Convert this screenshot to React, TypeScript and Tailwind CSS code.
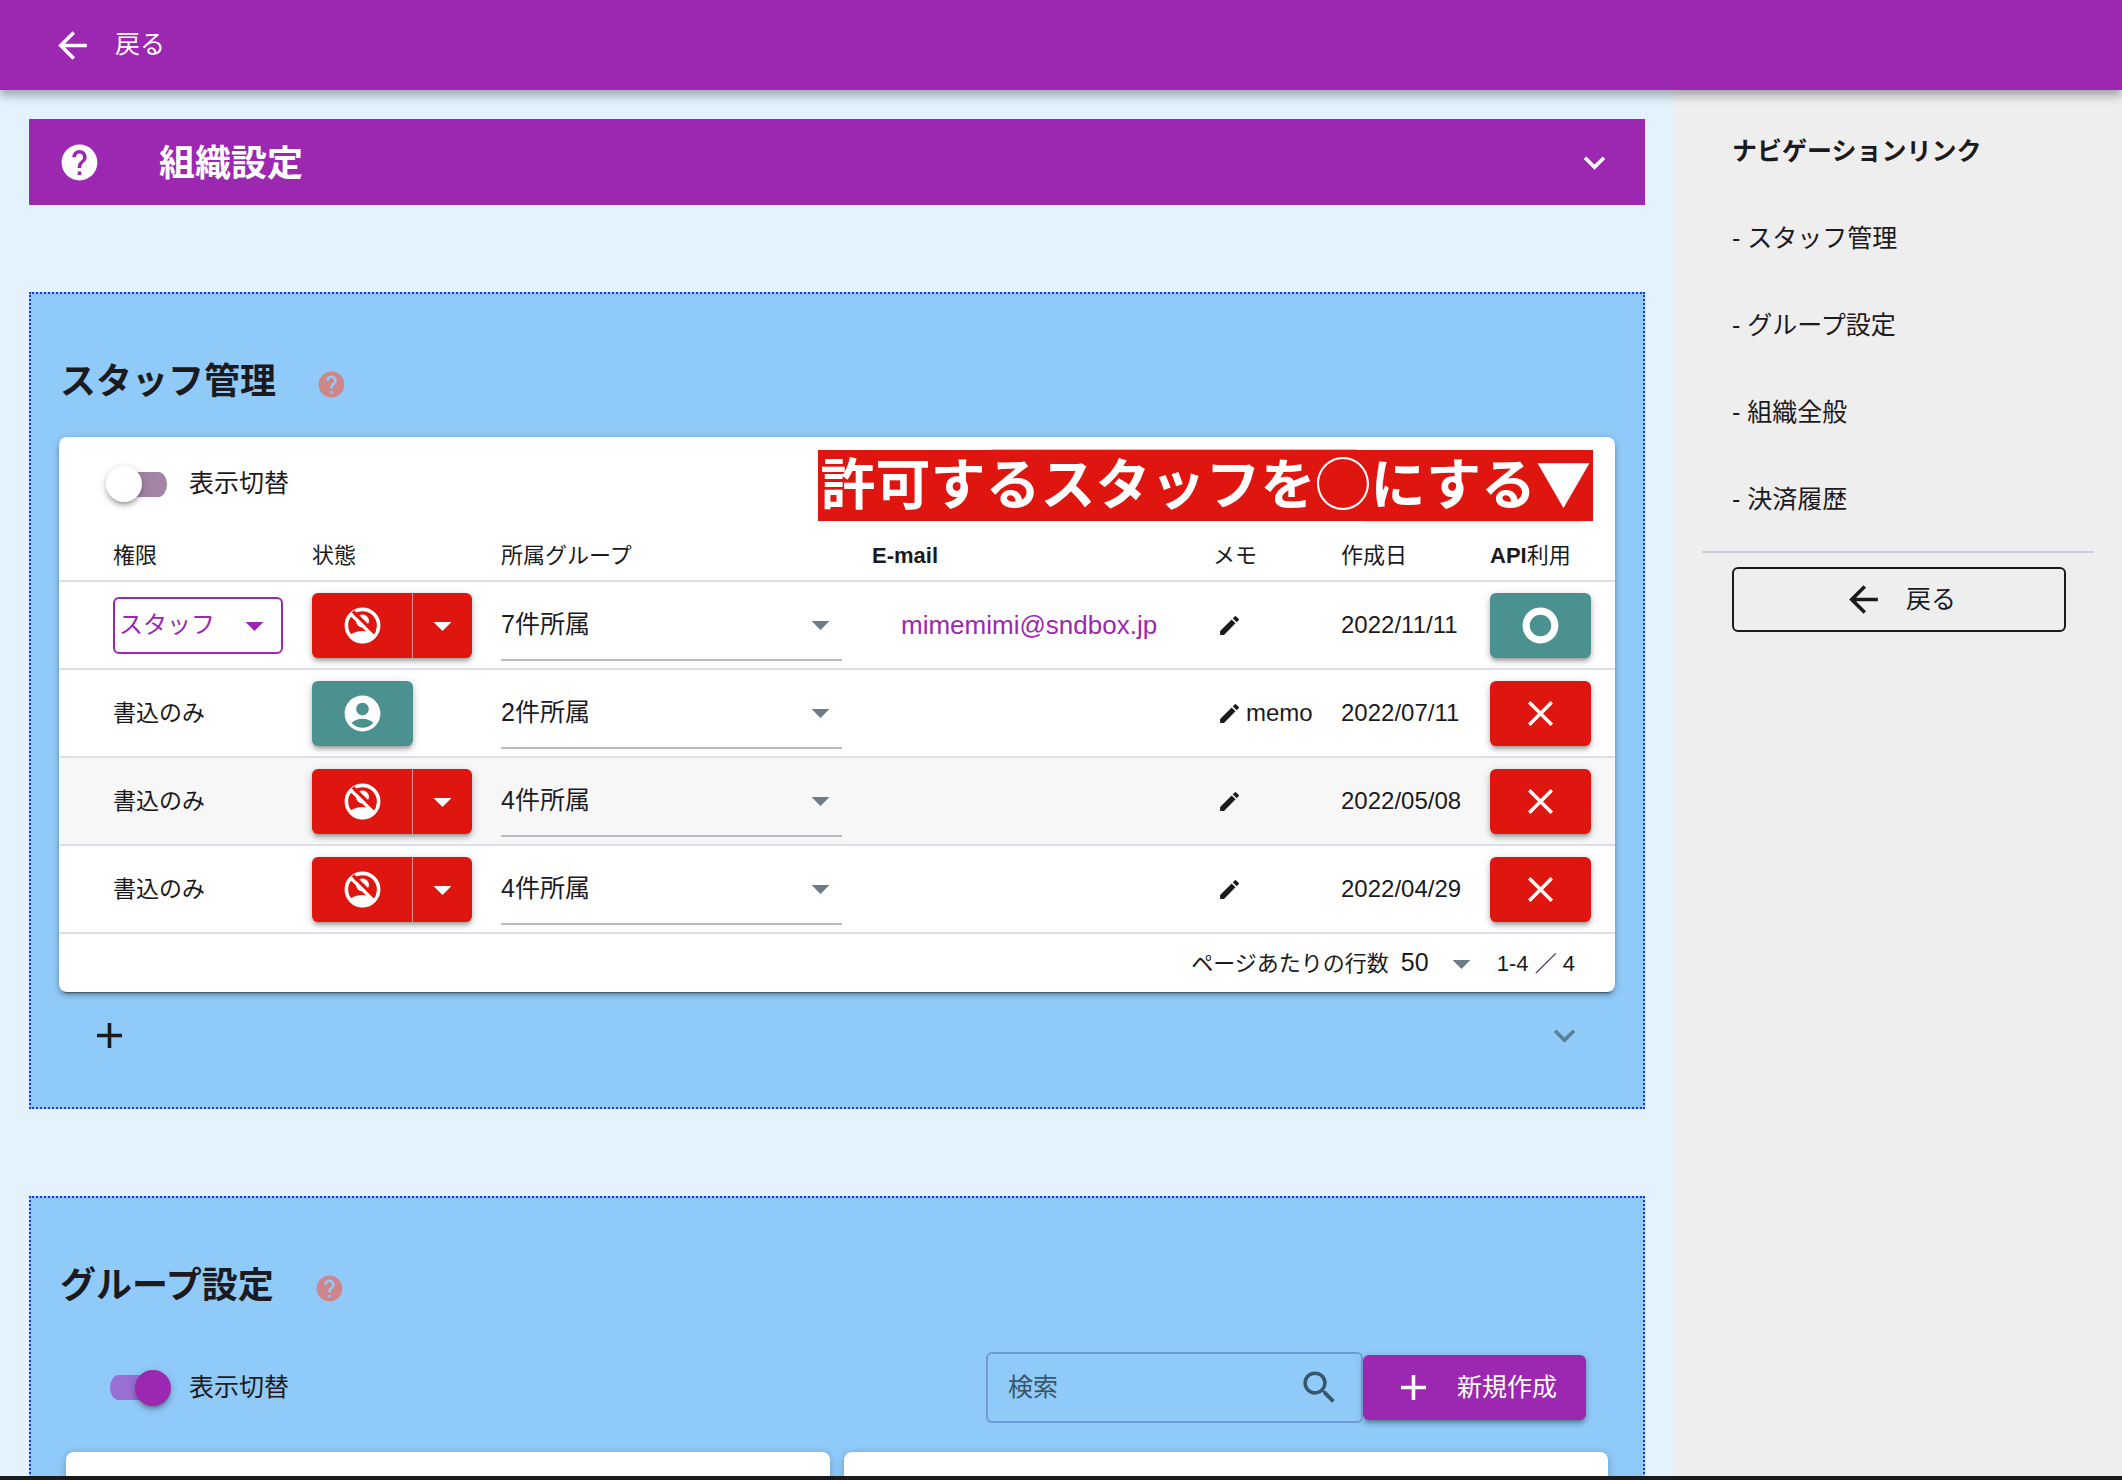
import { useState } from "react";
import type { ReactNode } from "react";
import {
  MdAccountCircle,
  MdAdd,
  MdArrowBack,
  MdArrowDropDown,
  MdClose,
  MdEdit,
  MdHelp,
  MdKeyboardArrowDown,
  MdSearch,
  MdTripOrigin,
} from "react-icons/md";

type Staff = {
  id: number;
  role: string;
  editable?: boolean;
  active: boolean;
  groups: string;
  email?: string;
  memo?: string;
  created: string;
  api: boolean;
};

const STAFF: Staff[] = [
  { id: 1, role: "スタッフ", editable: true, active: false, groups: "7件所属", email: "mimemimi@sndbox.jp", created: "2022/11/11", api: true },
  { id: 2, role: "書込のみ", active: true, groups: "2件所属", memo: "memo", created: "2022/07/11", api: false },
  { id: 3, role: "書込のみ", active: false, groups: "4件所属", created: "2022/05/08", api: false },
  { id: 4, role: "書込のみ", active: false, groups: "4件所属", created: "2022/04/29", api: false },
];

const LINKS = [
  { href: "#staff", label: "スタッフ管理" },
  { href: "#group", label: "グループ設定" },
  { href: "#org", label: "組織全般" },
  { href: "#billing", label: "決済履歴" },
];

const RAISED = "shadow-[0_2px_8px_rgba(0,0,0,0.2),0_4px_4px_rgba(0,0,0,0.14),0_4px_2px_-2px_rgba(0,0,0,0.12)]";

function NoAccountIcon() {
  return (
    <svg viewBox="0 0 24 24" className="size-[43px]" aria-hidden="true">
      <circle cx="12" cy="12" r="9" fill="none" stroke="#fff" strokeWidth="2" />
      <circle cx="12" cy="9.5" r="3.6" fill="#fff" />
      <path d="M5 17.2C7 15.8 9.400 15 12 15s5 .8 7 2.200A8.800 8.800 0 0 1 12 20.800a8.800 8.800 0 0 1-7-3.600z" fill="#fff" />
      <path d="M6.700 4.100 18.800 16.200" stroke="#de160f" strokeWidth="1.900" />
      <path d="M5.300 5.500 18.400 18.300" stroke="#fff" strokeWidth="1.800" />
    </svg>
  );
}

function Toggle({ initial }: { initial: boolean }) {
  const [on, setOn] = useState(initial);
  return (
    <label className="flex cursor-pointer items-center gap-[18px] text-[25px]">
      <input type="checkbox" className="peer sr-only" checked={on} onChange={(e) => setOn(e.target.checked)} />
      <span
        className={`flex h-[25px] w-[65px] items-center rounded-full bg-clip-content px-1 ${
          on ? "justify-end bg-[#9c27b0]/55" : "justify-start bg-[#a285a5]"
        }`}
      >
        <span className={`-mx-1 size-9 shrink-0 rounded-full ${RAISED} ${on ? "bg-[#9c27b0]" : "bg-white"}`} />
      </span>
      表示切替
    </label>
  );
}

function Section({ id, title, children }: { id: string; title: string; children: ReactNode }) {
  return (
    <section id={id} className="border-2 border-dotted border-[#1c2fff] bg-[#90caf9] px-7 pt-[50px]">
      <div className="mb-[21px] flex h-[72px] items-center gap-10 pl-px">
        <h2 className="pt-1 text-[36px] font-bold">{title}</h2>
        <button aria-label={`${title}のヘルプ`} className="pt-2 text-[#cd8689]">
          <MdHelp className="size-[31px]" />
        </button>
      </div>
      {children}
    </section>
  );
}

function StatusButton({ active }: { active: boolean }) {
  if (active) {
    return (
      <button aria-label="有効" className={`flex h-[65px] w-[101px] items-center justify-center rounded-md bg-[#4b9190] text-white ${RAISED}`}>
        <MdAccountCircle className="size-[43px]" />
      </button>
    );
  }
  return (
    <div className={`flex h-[65px] w-[160px] rounded-md bg-[#de160f] text-white ${RAISED}`}>
      <button aria-label="無効" className="flex w-[101px] items-center justify-center border-r border-[#e98f8c]">
        <NoAccountIcon />
      </button>
      <button aria-label="状態を変更" className="flex flex-1 items-center justify-center">
        <MdArrowDropDown className="size-[43px]" />
      </button>
    </div>
  );
}

function StaffRow({ staff }: { staff: Staff }) {
  return (
    <tr className={`h-[88px] border-b-2 border-[#dcdfe7] ${staff.id === 3 ? "bg-[#f7f7f7]" : ""}`}>
      <td className="pl-[54px] text-[23px]">
        {staff.editable ? (
          <div className="relative h-[57px] w-[170px] text-[#9c27b0]">
            <select aria-label="権限" className="h-full w-full appearance-none rounded-md border-2 border-[#9c27b0] pl-1 text-[24px]">
              <option>{staff.role}</option>
            </select>
            <MdArrowDropDown className="pointer-events-none absolute top-[7px] right-[7px] size-[43px]" />
          </div>
        ) : (
          staff.role
        )}
      </td>
      <td className="pl-3.5">
        <StatusButton active={staff.active} />
      </td>
      <td className="pl-3.5">
        <div className="relative w-[341px]">
          <select aria-label="所属グループ" className="h-[72px] w-full appearance-none border-b-2 border-[#b9bbc4] pt-0.5 text-[25px]">
            <option>{staff.groups}</option>
          </select>
          <MdArrowDropDown className="pointer-events-none absolute top-3.5 right-0 size-[43px] text-[#6e7c86]" />
        </div>
      </td>
      <td className="pl-[43px]">
        {staff.email && (
          <a href={`mailto:${staff.email}`} className="text-[26px] text-[#9c27b0]">
            {staff.email}
          </a>
        )}
      </td>
      <td className="pl-4">
        <button aria-label="メモを編集" className="flex items-center gap-1 text-[24px]">
          <MdEdit className="size-[25px]" />
          {staff.memo}
        </button>
      </td>
      <td className="pl-3.5 text-[24px]">{staff.created}</td>
      <td className="pl-3.5">
        <button
          aria-label={staff.api ? "API利用中" : "API利用不可"}
          className={`flex h-[65px] w-[101px] items-center justify-center rounded-md text-white ${RAISED} ${
            staff.api ? "bg-[#4b9190]" : "bg-[#de160f]"
          }`}
        >
          {staff.api ? <MdTripOrigin className="size-[43px]" /> : <MdClose className="size-[43px]" />}
        </button>
      </td>
    </tr>
  );
}

function StaffTable() {
  return (
    <div className="rounded-lg bg-white shadow-[0_2px_9px_rgba(0,0,0,0.2),0_4px_4px_rgba(0,0,0,0.14),0_5px_2px_-4px_rgba(0,0,0,0.5)]">
      <div className="relative flex h-[94px] items-center justify-between pr-[29px] pl-[47px]">
        <Toggle initial={false} />
        <div className="flex items-center">
          <input type="search" aria-label="スタッフ検索" className="h-[71px] w-[373px] rounded-md border-2 border-[#c2c4cc]" />
          <button aria-label="スタッフを追加" className={`h-[65px] w-[225px] rounded-md bg-[#9c27b0] ${RAISED}`} />
        </div>
        <p className="absolute top-[13px] right-[22px] h-[71px] bg-[#de160f] px-0.5 font-['Noto_Sans_CJK_JP',sans-serif] text-[55px] leading-[60px] font-bold whitespace-nowrap text-white">
          許可するスタッフを◯にする▼
        </p>
      </div>
      <table className="w-full table-fixed border-collapse text-left">
        <colgroup>
          <col className="w-[239px]" />
          <col className="w-[189px]" />
          <col className="w-[371px]" />
          <col className="w-[343px]" />
          <col className="w-[126px]" />
          <col className="w-[149px]" />
          <col className="w-[139px]" />
        </colgroup>
        <thead>
          <tr className="h-[50px] border-b-2 border-[#dcdfe7] text-[22px]">
            <th className="pl-[54px] font-normal">権限</th>
            <th className="pl-3.5 font-normal">状態</th>
            <th className="pl-3.5 font-normal">所属グループ</th>
            <th className="pl-3.5 font-bold">E-mail</th>
            <th className="pl-3 font-normal">メモ</th>
            <th className="pl-3.5 font-normal">作成日</th>
            <th className="pl-3.5 font-normal">
              <span className="font-bold">API</span>利用
            </th>
          </tr>
        </thead>
        <tbody>
          {STAFF.map((s) => (
            <StaffRow key={s.id} staff={s} />
          ))}
        </tbody>
      </table>
      <div className="flex h-[58px] items-center justify-end pr-10 text-[22px]">
        <label htmlFor="rows">ページあたりの行数</label>
        <div className="relative ml-3 w-[82px]">
          <select id="rows" className="w-full appearance-none text-[25px]">
            <option>50</option>
          </select>
          <MdArrowDropDown className="pointer-events-none absolute -top-0.5 right-0 size-[43px] text-[#6e7c86]" />
        </div>
        <span className="ml-3.5">1-4 ／ 4</span>
      </div>
    </div>
  );
}

export default function App() {
  return (
    <div
      lang="ja"
      className="flex h-screen flex-col overflow-hidden bg-[#e3f2fd] font-['Liberation_Sans','Noto_Sans_CJK_JP',sans-serif] text-[#1b1a1e]"
    >
      <header className="z-10 flex h-[90px] shrink-0 items-center bg-[#9c27b0] px-[51px] text-white shadow-[0_4px_8px_rgba(0,0,0,0.22),0_8px_10px_rgba(0,0,0,0.12)]">
        <button className="flex items-center gap-[21px] text-[25px]">
          <MdArrowBack className="size-[43px]" />
          戻る
        </button>
      </header>

      <div className="flex min-h-0 flex-1">
        <main className="min-w-0 flex-1 space-y-[87px] overflow-hidden p-[29px]">
          <button className="flex h-[86px] w-full items-center bg-[#9c27b0] px-[29px] text-white">
            <MdHelp className="size-[43px]" />
            <span className="ml-[58px] flex-1 pt-1 text-left text-[36px] font-bold">組織設定</span>
            <MdKeyboardArrowDown className="size-[43px]" />
          </button>

          <Section id="staff" title="スタッフ管理">
            <StaffTable />
            <div className="flex h-[115px] items-start justify-between px-[29px] pt-[22px]">
              <button aria-label="追加">
                <MdAdd className="size-[43px]" />
              </button>
              <button aria-label="開く" className="text-[#5a7f96]">
                <MdKeyboardArrowDown className="size-[43px]" />
              </button>
            </div>
          </Section>

          <Section id="group" title="グループ設定">
            <div className="mb-[18px] flex h-[93px] items-center justify-between pr-[29px] pl-[47px]">
              <Toggle initial />
              <div className="flex items-center">
                <div className="relative h-[71px] w-[377px]">
                  <input
                    type="search"
                    aria-label="グループ検索"
                    placeholder="検索"
                    className="h-full w-full rounded-md border-2 border-[#7299d3] pr-16 pl-5 text-[25px] placeholder:text-[#3b5568]"
                  />
                  <MdSearch className="pointer-events-none absolute top-3.5 right-[22px] size-[43px] text-[#35566b]" />
                </div>
                <button className={`flex h-[65px] items-center gap-[22px] rounded-md bg-[#9c27b0] px-[29px] text-[25px] text-white ${RAISED}`}>
                  <MdAdd className="size-[43px]" />
                  新規作成
                </button>
              </div>
            </div>
            <div className="grid grid-cols-2 gap-3.5 px-[7px]">
              <div className="h-[300px] rounded-lg bg-white shadow-[0_2px_9px_rgba(0,0,0,0.25)]" />
              <div className="h-[300px] rounded-lg bg-white shadow-[0_2px_9px_rgba(0,0,0,0.25)]" />
            </div>
          </Section>
        </main>

        <aside className="w-[448px] shrink-0 bg-[#eeeeee] px-7 pt-[18px] text-[25px]">
          <h3 className="flex h-[87px] items-center pl-[30px] font-bold">ナビゲーションリンク</h3>
          <nav>
            {LINKS.map((l) => (
              <a key={l.href} href={l.href} className="flex h-[87px] items-center pl-[30px]">
                - {l.label}
              </a>
            ))}
          </nav>
          <hr className="mt-2 border-t-2 border-[#cdd0d8]" />
          <div className="pt-3.5 pr-7 pl-[30px]">
            <button className="flex h-[65px] w-full items-center justify-center gap-[21px] rounded-md border-2 border-[#1b1a1e]">
              <MdArrowBack className="size-[43px]" />
              戻る
            </button>
          </div>
        </aside>
      </div>
      <footer className="z-10 h-1 shrink-0 bg-[#1b1a1e]" />
    </div>
  );
}
